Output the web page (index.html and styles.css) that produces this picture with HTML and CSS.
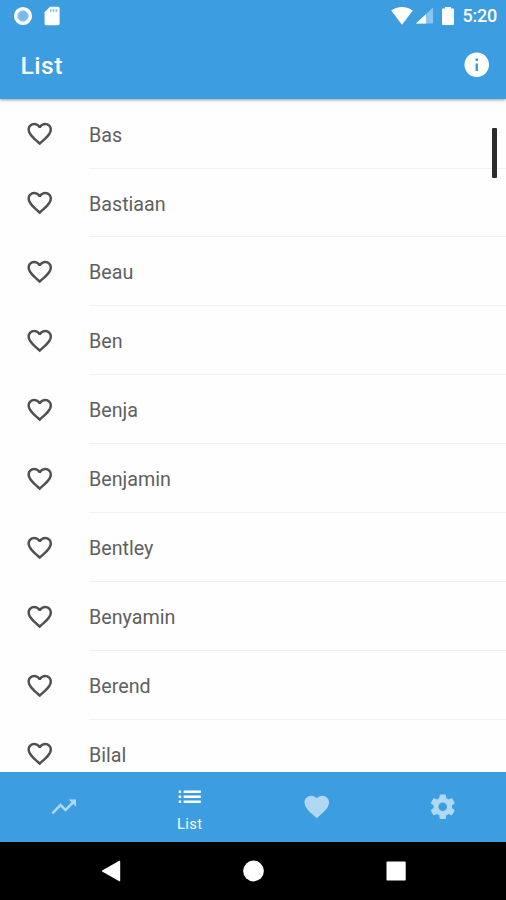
FILE: index.html
```
<!DOCTYPE html>
<html lang="en">
<head>
<meta charset="utf-8">
<title>List</title>
<link rel="stylesheet" href="styles.css">
</head>
<body>
<svg class="defs" aria-hidden="true">
  <symbol id="heart-outline" viewBox="0 0 24 24"><path d="M16.5 3c-1.74 0-3.41.81-4.5 2.09C10.91 3.81 9.24 3 7.5 3 4.42 3 2 5.42 2 8.5c0 3.78 3.4 6.86 8.55 11.54L12 21.35l1.45-1.32C18.6 15.36 22 12.28 22 8.5 22 5.42 19.58 3 16.5 3zm-4.4 15.55l-.1.1-.1-.1C7.14 14.24 4 11.39 4 8.5 4 6.5 5.5 5 7.5 5c1.54 0 3.04.99 3.57 2.36h1.87C13.46 5.99 14.96 5 16.5 5c2 0 3.5 1.5 3.5 3.5 0 2.89-3.14 5.74-7.9 10.05z"/></symbol>
</svg>
<div class="screen">
  <header class="header">
    <div class="status">
      <svg class="spinner" viewBox="0 0 20 20"><circle cx="10" cy="10" r="7.4" fill="#8cc5ee" stroke="#fff" stroke-width="3.4"/><circle cx="10" cy="10" r="4.2" fill="#75b9ea"/></svg>
      <svg class="sd" viewBox="0 0 16 20"><path fill="#fff" d="M6 .8h8c1 0 1.600.6 1.600 1.600v15.200c0 1-.6 1.600-1.600 1.600H2.200c-1 0-1.600-.6-1.600-1.600V6.200z"/><path fill="#8cc5ee" d="M6 3h1.600v3H6zm2.800 0h1.600v3H8.800zm2.800 0h1.600v3h-1.600z"/></svg>
      <span class="spacer"></span>
      <svg class="wifi" viewBox="0 0 22 18"><path fill="#fff" d="M.2 3.600C3.200 1.300 7 0 11 0s7.800 1.300 10.800 3.600L11 17.700z"/></svg>
      <svg class="signal" viewBox="0 0 18 18"><path fill="#8bc4ee" d="M18 0v17H0z"/><path fill="#fff" d="M10.500 7.100V17H0z"/></svg>
      <svg class="battery" viewBox="0 0 12 18"><path fill="#fff" d="M3 0h6v1.500h2c.6 0 1 .4 1 1V17c0 .6-.4 1-1 1H1c-.6 0-1-.4-1-1V2.500c0-.6.4-1 1-1h2z"/></svg>
      <span class="clock">5:20</span>
    </div>
    <div class="toolbar">
      <h1 class="title">List</h1>
      <svg class="icon info" viewBox="0 0 24 24"><path d="M12 2C6.480 2 2 6.480 2 12s4.480 10 10 10 10-4.480 10-10S17.520 2 12 2zm1 15h-2v-6h2v6zm0-8h-2V7h2v2z"/></svg>
    </div>
  </header>
  <main class="content">
    <ul class="list">
      <li class="row"><svg class="icon"><use href="#heart-outline"/></svg><span class="name">Bas</span></li>
      <li class="row"><svg class="icon"><use href="#heart-outline"/></svg><span class="name">Bastiaan</span></li>
      <li class="row"><svg class="icon"><use href="#heart-outline"/></svg><span class="name">Beau</span></li>
      <li class="row"><svg class="icon"><use href="#heart-outline"/></svg><span class="name">Ben</span></li>
      <li class="row"><svg class="icon"><use href="#heart-outline"/></svg><span class="name">Benja</span></li>
      <li class="row"><svg class="icon"><use href="#heart-outline"/></svg><span class="name">Benjamin</span></li>
      <li class="row"><svg class="icon"><use href="#heart-outline"/></svg><span class="name">Bentley</span></li>
      <li class="row"><svg class="icon"><use href="#heart-outline"/></svg><span class="name">Benyamin</span></li>
      <li class="row"><svg class="icon"><use href="#heart-outline"/></svg><span class="name">Berend</span></li>
      <li class="row"><svg class="icon"><use href="#heart-outline"/></svg><span class="name">Bilal</span></li>
    </ul>
    <div class="scrollbar"></div>
  </main>
  <nav class="tabs">
    <div class="tab"><svg class="icon" viewBox="0 0 24 24"><path d="M16 6l2.290 2.290-4.880 4.880-4-4L2 16.590 3.410 18l6-6 4 4 6.300-6.290L22 12V6z"/></svg></div>
    <div class="tab active"><svg class="icon" viewBox="0 0 24 24"><path d="M3 13h2v-2H3v2zm0 4h2v-2H3v2zm0-8h2V7H3v2zm4 4h14v-2H7v2zm0 4h14v-2H7v2zM7 7v2h14V7H7z"/></svg><span class="label">List</span></div>
    <div class="tab"><svg class="icon" viewBox="0 0 24 24"><path d="M12 21.350l-1.450-1.320C5.400 15.360 2 12.280 2 8.500 2 5.420 4.420 3 7.500 3c1.740 0 3.410.810 4.500 2.090C13.090 3.810 14.760 3 16.500 3 19.580 3 22 5.420 22 8.500c0 3.780-3.400 6.860-8.550 11.540L12 21.350z"/></svg></div>
    <div class="tab"><svg class="icon" viewBox="0 0 24 24"><path d="M19.430 12.980c.04-.32.07-.64.07-.98s-.03-.66-.07-.98l2.110-1.650c.19-.15.24-.42.12-.64l-2-3.460c-.12-.22-.39-.3-.61-.22l-2.490 1c-.52-.4-1.080-.73-1.690-.98l-.38-2.650C14.460 2.180 14.250 2 14 2h-4c-.25 0-.46.18-.49.42l-.38 2.650c-.61.25-1.170.59-1.690.98l-2.490-1c-.23-.09-.49 0-.61.22l-2 3.460c-.13.22-.07.49.12.64l2.110 1.650c-.04.32-.07.65-.07.98s.03.66.07.98l-2.110 1.650c-.19.15-.24.42-.12.64l2 3.460c.12.22.39.3.61.22l2.490-1c.52.4 1.080.73 1.690.98l.38 2.650c.03.24.24.42.49.42h4c.25 0 .46-.18.49-.42l.38-2.650c.61-.25 1.170-.59 1.690-.98l2.490 1c.23.09.49 0 .61-.22l2-3.460c.12-.22.07-.49-.12-.64l-2.110-1.650zM12 15.500c-1.930 0-3.500-1.570-3.500-3.500s1.570-3.500 3.500-3.500 3.500 1.570 3.500 3.500-1.570 3.500-3.500 3.500z"/></svg></div>
  </nav>
  <footer class="system">
    <svg class="key" viewBox="0 0 22 22"><path fill="#fff" d="M19.300.8c.5-.3.900 0 .900.500v19.400c0 .500-.400.800-.900.500L2.500 11.700c-.6-.4-.6-1 0-1.400z"/></svg>
    <svg class="key" viewBox="0 0 22 22"><circle cx="10.500" cy="11" r="10.400" fill="#fff"/></svg>
    <svg class="key" viewBox="0 0 22 22"><rect x=".5" y="1.400" width="19.200" height="19.200" rx="1.200" fill="#fff"/></svg>
  </footer>
</div>
</body>
</html>
```
FILE: styles.css
```
* { box-sizing: border-box; }
body { margin: 0; font-family: Roboto, "Liberation Sans", sans-serif; background: #fff; }
.defs { position: absolute; width: 0; height: 0; }
.screen { width: 506px; height: 900px; display: flex; flex-direction: column; overflow: hidden; }
.icon { width: 29.5px; height: 29.5px; flex: none; fill: currentColor; display: block; }

.header { height: 98.5px; flex: none; background: #3d9de1; color: #fff; position: relative; z-index: 1; box-shadow: 0 1px 3px rgba(0, 0, 0, .4); }
.status { height: 31px; display: flex; align-items: center; padding: 0 9.5px 0 13px; }
.spinner { width: 20px; height: 20px; }
.sd { width: 16px; height: 20px; margin-left: 11px; }
.spacer { flex: 1; }
.wifi { width: 22px; height: 18px; }
.signal { width: 17px; height: 18px; margin-left: 3px; }
.battery { width: 12px; height: 18px; margin-left: 9px; }
.clock { margin-left: 9px; font-size: 18px; font-weight: 500; line-height: 31px; width: 34px; white-space: nowrap; letter-spacing: -.2px; }
.toolbar { height: 67px; display: flex; align-items: center; justify-content: space-between; padding: 0 14.5px 0 20.5px; }
.title { margin: 3px 0 0; font-size: 24.6px; line-height: 30px; font-weight: 500; letter-spacing: .5px; }

.content { flex: 1; min-height: 0; position: relative; overflow: hidden; background: #fefefe; }
.list { list-style: none; margin: 0; padding: 1.2px 0 0; }
.row { height: 68.9px; display: flex; align-items: center; padding-left: 25px; color: #505050; }
.name { flex: 1; height: 100%; margin-left: 34.5px; line-height: 71.6px; font-size: 19.7px; color: #606060; border-bottom: 1px solid #f1f1f1; }
.scrollbar { position: absolute; top: 29px; right: 9px; width: 5px; height: 50px; border-radius: 1px; background: #2c2c2c; }

.tabs { height: 69.5px; flex: none; display: flex; background: #3d9de1; color: #b1d8f3; }
.tab { flex: 1; display: flex; flex-direction: column; align-items: center; justify-content: center; }
.active { color: #fff; padding-top: 1.5px; }
.label { font-size: 14.8px; line-height: 18px; margin-top: 3px; letter-spacing: .4px; }
.system { height: 58.5px; flex: none; background: #000; display: flex; justify-content: center; align-items: center; gap: 121px; padding-left: 1px; }
.key { width: 22px; height: 22px; }
```
